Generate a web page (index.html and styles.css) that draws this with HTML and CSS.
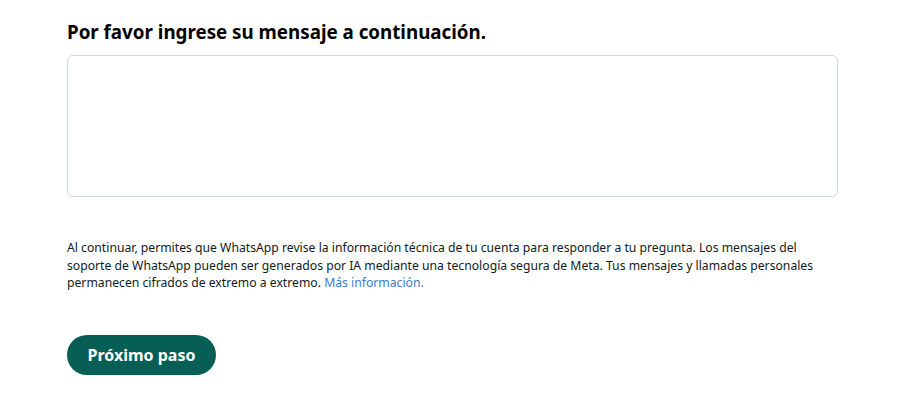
FILE: index.html
```html
<!DOCTYPE html>
<html lang="es">
<head>
<meta charset="utf-8">
<link rel="stylesheet" href="styles.css">
</head>
<body>
<main class="page">
  <h1 class="title">Por favor ingrese su mensaje a continuación.</h1>
  <textarea class="message" aria-label="Mensaje"></textarea>
  <p class="notice">Al continuar, permites que WhatsApp revise la información técnica de tu cuenta para responder a tu pregunta. Los mensajes del soporte de WhatsApp pueden ser generados por IA mediante una tecnología segura de Meta. Tus mensajes y llamadas personales permanecen cifrados de extremo a extremo. <a class="link" href="#">Más información.</a></p>
  <button class="next" type="button">Próximo paso</button>
</main>
</body>
</html>
```
FILE: styles.css
```css
html, body {
  margin: 0;
  padding: 0;
  background: #fff;
}
body {
  font-family: "Noto Sans", "Open Sans", sans-serif;
  color: #111b21;
}
.page {
  width: 771px;
  padding: 18px 0 0 67px;
  display: flex;
  flex-direction: column;
  align-items: flex-start;
}
.title {
  margin: 0;
  font-size: 18.75px;
  font-weight: 700;
  line-height: 28px;
  color: #000;
}
.message {
  box-sizing: border-box;
  margin-top: 9px;
  width: 771px;
  height: 142px;
  border: 1px solid #d1d7db;
  border-radius: 6px;
  resize: none;
  outline: none;
  font: inherit;
}
.notice {
  margin: 42px 0 0;
  font-size: 12.2px;
  line-height: 17.5px;
  color: #111b21;
}
.link {
  color: #3a7bd5;
  text-decoration: none;
}
.next {
  margin-top: 43px;
  width: 149px;
  height: 40px;
  border: none;
  border-radius: 20px;
  background: #075e54;
  color: #fff;
  font-family: inherit;
  font-size: 16px;
  font-weight: 700;
  cursor: pointer;
}
```
